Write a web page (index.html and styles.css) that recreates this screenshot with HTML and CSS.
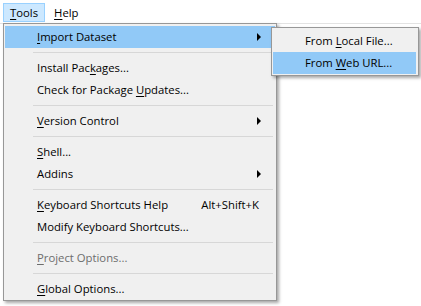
FILE: index.html
```html
<!DOCTYPE html>
<html lang="en">
<head>
  <meta charset="UTF-8" />
  <title>Tools menu</title>
  <link rel="stylesheet" href="styles.css">
</head>
<body>
  <div class="menubar">
    <span class="menubar-item is-open"><u>T</u>ools</span>
    <span class="menubar-item"><u>H</u>elp</span>
  </div>
  <div class="workspace"></div>

  <div class="menu main-menu">
    <div class="menu-item is-active">
      <span class="label"><u>I</u>mport Dataset</span>
      <span class="arrow"></span>
    </div>
    <div class="sep"></div>
    <div class="menu-item"><span class="label">Install Pac<u>k</u>ages...</span></div>
    <div class="menu-item"><span class="label">Check for Package <u>U</u>pdates...</span></div>
    <div class="sep"></div>
    <div class="menu-item">
      <span class="label"><u>V</u>ersion Control</span>
      <span class="arrow"></span>
    </div>
    <div class="sep"></div>
    <div class="menu-item"><span class="label"><u>S</u>hell...</span></div>
    <div class="menu-item">
      <span class="label">Addins</span>
      <span class="arrow"></span>
    </div>
    <div class="sep"></div>
    <div class="menu-item">
      <span class="label"><u>K</u>eyboard Shortcuts Help</span>
      <span class="shortcut">Alt+Shift+K</span>
    </div>
    <div class="menu-item"><span class="label">Modify Keyboard Shortcuts...</span></div>
    <div class="sep"></div>
    <div class="menu-item is-disabled"><span class="label"><u>P</u>roject Options...</span></div>
    <div class="sep"></div>
    <div class="menu-item"><span class="label"><u>G</u>lobal Options...</span></div>
  </div>

  <div class="menu sub-menu">
    <div class="menu-item"><span class="label">From <u>L</u>ocal File...</span></div>
    <div class="menu-item is-active"><span class="label">From <u>W</u>eb URL...</span></div>
  </div>
</body>
</html>
```

FILE: styles.css
```css
body {
  margin: 0;
  width: 421px;
  height: 306px;
  overflow: hidden;
  background: #fff;
  font-family: "Open Sans", "Noto Sans", Arial, sans-serif;
  font-size: 11.3px;
  color: #000;
  position: relative;
}
u {
  text-decoration-thickness: 1px;
  text-underline-offset: 2px;
}

.menubar {
  height: 23px;
  border-bottom: 1px solid #e3e3e3;
  display: flex;
  align-items: flex-start;
  padding: 3px 0 0 3px;
  box-sizing: border-box;
  height: 24px;
}
.menubar-item {
  height: 19px;
  line-height: 18px;
  padding: 0 6px;
  border: 1px solid transparent;
  box-sizing: border-box;
  margin-right: 2px;
}
.menubar-item.is-open {
  background: #cce8ff;
  border-color: #99d1ff;
}

.workspace {
  height: 282px;
  background: #fff;
}

.menu {
  position: absolute;
  background: #f0f0f0;
  border: 1px solid #979797;
  box-sizing: border-box;
  box-shadow: 2px 2px 3px rgba(0,0,0,0.35);
}
.main-menu {
  left: 3px;
  top: 23px;
  width: 274px;
  padding: 2px 1px 0 1px;
}
.sub-menu {
  left: 271px;
  top: 27px;
  width: 148px;
  padding: 2px 2px 1px 1px;
}

.menu-item {
  display: flex;
  align-items: center;
  height: 22px;
  line-height: 22px;
  padding: 0 14px 0 32px;
  white-space: nowrap;
}
.menu-item.is-active {
  background: #91c9f7;
}
.menu-item.is-disabled {
  color: #6d6d6d;
}
.label {
  flex: 1;
}
.shortcut {
  padding-right: 2px;
}
.arrow {
  width: 0;
  height: 0;
  border-left: 4px solid #000;
  border-top: 4px solid transparent;
  border-bottom: 4px solid transparent;
}

.sep {
  height: 9px;
  position: relative;
}
.sep::after {
  content: "";
  position: absolute;
  left: 28px;
  right: 2px;
  top: 4px;
  border-top: 1px solid #d7d7d7;
}
```
